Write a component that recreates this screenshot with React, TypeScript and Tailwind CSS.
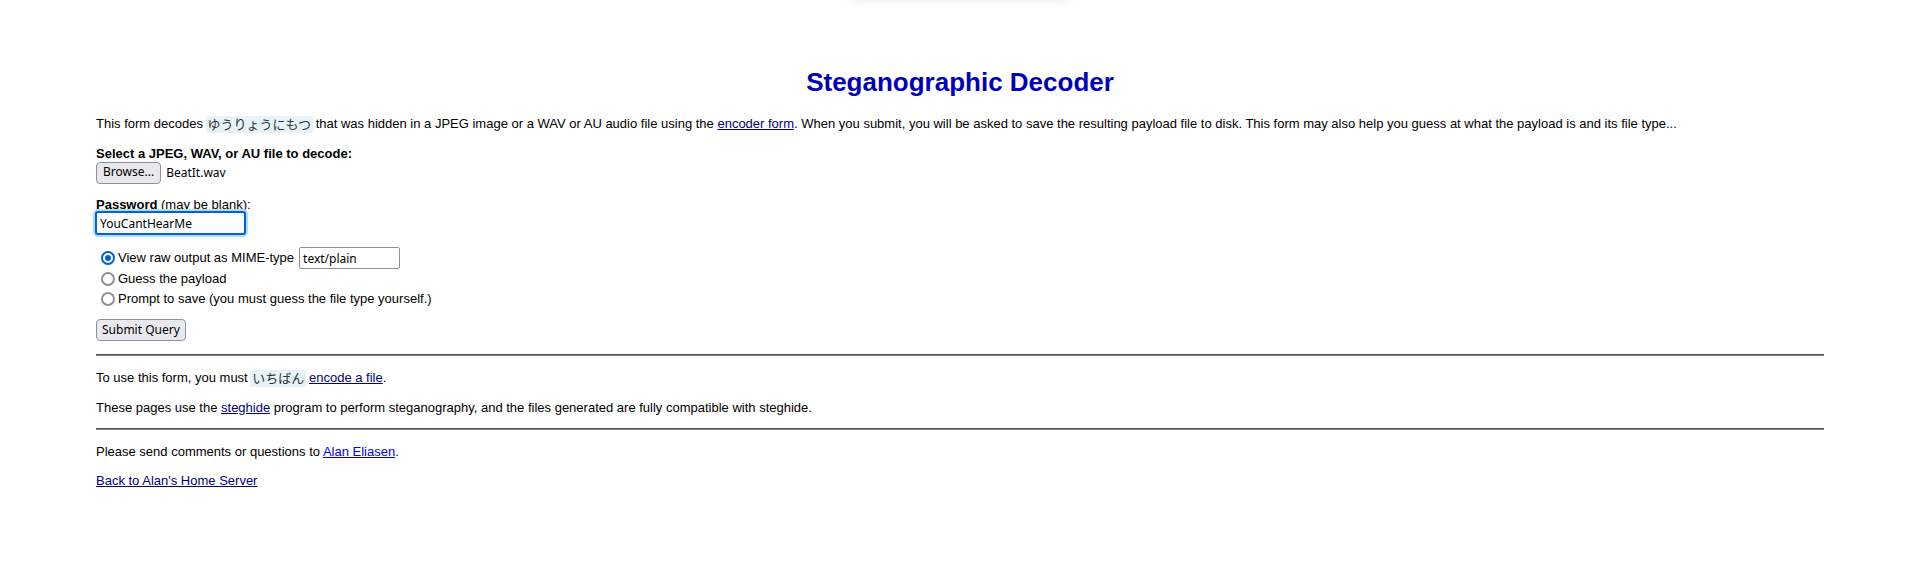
import { useState } from "react";
import type { ReactNode } from "react";

const control =
  "font-['Noto_Sans',sans-serif] text-[12px] leading-[18px] text-black border border-[#8f8f9d]";

function Furigana({ children }: { children: ReactNode }) {
  return (
    <span
      lang="ja"
      className="-mx-px inline-block h-[17px] rounded-[2px] bg-[#e6f4fa] px-[2px] align-middle font-['Noto_Sans_CJK_JP',sans-serif] text-[13px] leading-[15px] text-[#333]"
    >
      {children}
    </span>
  );
}

function Link({ href, children }: { href: string; children: ReactNode }) {
  return (
    <a href={href} className="text-[#000080] underline">
      {children}
    </a>
  );
}

function Rule() {
  return <hr className="h-[2px] border-t border-b border-t-[#555] border-b-[#808080]" />;
}

function Radio({ id, checked, onChange }: { id: string; checked: boolean; onChange: () => void }) {
  return (
    <input
      type="radio"
      name="output"
      id={id}
      checked={checked}
      onChange={onChange}
      className="mr-[3px] ml-[5px] size-[14px] shrink-0 appearance-none rounded-full border-2 border-[#8f8f9d] bg-white checked:border-[#0061e0] checked:bg-[#0061e0] checked:bg-clip-content checked:p-[2px]"
    />
  );
}

export default function App() {
  const [file, setFile] = useState("BeatIt.wav");
  const [password, setPassword] = useState("YouCantHearMe");
  const [mime, setMime] = useState("text/plain");
  const [mode, setMode] = useState("raw");

  return (
    <div className="relative overflow-hidden font-['Liberation_Sans',Arial,sans-serif] text-[13px] leading-[16px] text-black">
      <div className="absolute -top-[10px] left-1/2 h-[8px] w-[224px] -translate-x-1/2 rounded shadow-[0_0_12px_rgba(0,0,0,0.14)]" />
      <main className="mx-[5%] pt-[64px] pb-[72px]">
        <h1 className="text-center text-[26px] leading-[36px] font-bold text-[#0000bb]">
          Steganographic Decoder
        </h1>
        <p className="mt-[16px]">
          This form decodes <Furigana>ゆうりょうにもつ</Furigana> that was hidden in a JPEG image or a
          WAV or AU audio file using the <Link href="#encoder">encoder form</Link>. When you submit,
          you will be asked to save the resulting payload file to disk. This form may also help you
          guess at what the payload is and its file type...
        </p>

        <form onSubmit={(e) => e.preventDefault()} className="mt-[13px] flex flex-col items-start">
          <label htmlFor="file" className="font-bold">
            Select a JPEG, WAV, or AU file to decode:
          </label>
          <div className="flex items-center gap-[5px]">
            <input
              type="file"
              id="file"
              className="sr-only"
              onChange={(e) => setFile(e.target.files?.[0]?.name ?? "")}
            />
            <label htmlFor="file" className={`${control} h-[22px] rounded-[4px] bg-[#e9e9ed] px-[6px]`}>
              Browse...
            </label>
            <span className="font-['Noto_Sans',sans-serif] text-[12px]">{file}</span>
          </div>

          <label htmlFor="password" className="mt-[13px] h-[15px]">
            <b>Password</b> (may be blank):
          </label>
          <input
            id="password"
            value={password}
            onChange={(e) => setPassword(e.target.value)}
            className="h-[22px] w-[149px] rounded-[2px] bg-white px-[4px] font-['Noto_Sans',sans-serif] text-[12px] leading-[18px] shadow-[0_0_0_3px_#b3dcf9] outline-2 -outline-offset-1 outline-[#0061e0]"
          />

          <div className="mt-[13px] flex items-center">
            <Radio id="raw" checked={mode === "raw"} onChange={() => setMode("raw")} />
            <label htmlFor="raw">View raw output as MIME-type</label>
            <input
              aria-label="MIME-type"
              value={mime}
              onChange={(e) => setMime(e.target.value)}
              className={`${control} ml-[5px] h-[22px] w-[101px] rounded-[2px] bg-white px-[3px]`}
            />
          </div>
          <div className="flex h-[20px] items-center">
            <Radio id="guess" checked={mode === "guess"} onChange={() => setMode("guess")} />
            <label htmlFor="guess">Guess the payload</label>
          </div>
          <div className="flex h-[20px] items-center">
            <Radio id="save" checked={mode === "save"} onChange={() => setMode("save")} />
            <label htmlFor="save">Prompt to save (you must guess the file type yourself.)</label>
          </div>

          <button type="submit" className={`${control} mt-[10px] mb-[13px] h-[22px] rounded-[4px] bg-[#e9e9ed] px-[5px]`}>
            Submit Query
          </button>
        </form>

        <Rule />
        <p className="mt-[14px]">
          To use this form, you must <Furigana>いちばん</Furigana>{" "}
          <Link href="#encoder">encode a file</Link>.
        </p>
        <p className="mt-[13px] mb-[12px]">
          These pages use the <Link href="#steghide">steghide</Link> program to perform
          steganography, and the files generated are fully compatible with steghide.
        </p>
        <Rule />
        <p className="mt-[14px]">
          Please send comments or questions to{" "}
          <a href="#contact" className="text-[#0000ee] underline">
            Alan Eliasen
          </a>
          .
        </p>
        <p className="mt-[13px]">
          <Link href="#home">Back to Alan's Home Server</Link>
        </p>
      </main>
    </div>
  );
}
